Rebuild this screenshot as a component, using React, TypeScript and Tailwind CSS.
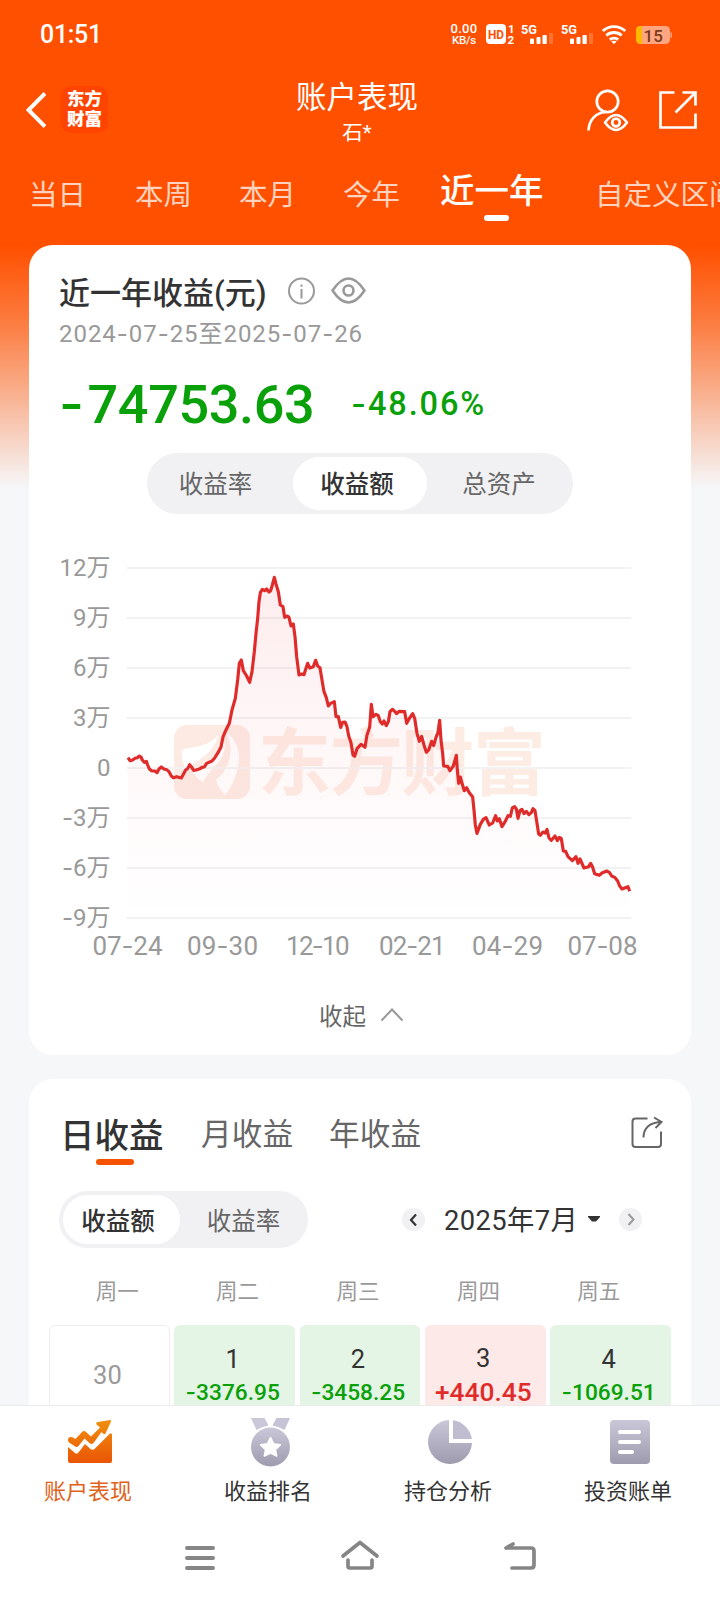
import React from "react";

const CJK = "font-['Roboto','Noto_Sans_CJK_SC',sans-serif]";

/** Numeric text whose hyphens use a wider glyph than the digit face has. */
function Num({ value, dash = "" }: { value: string; dash?: string }) {
  return (
    <>
      {value.split(/(-)/).map((part, i) =>
        part === "-" ? (
          <span key={i} className={`font-['Inter',sans-serif] ${dash}`}>
            -
          </span>
        ) : (
          part
        ),
      )}
    </>
  );
}

function StatusBar() {
  return (
    <div className="flex h-[68px] items-center pl-[40px] text-white">
      <span className="w-[411px] text-[25px] leading-none font-medium tracking-[-0.3px]">01:51</span>
      <div className="flex w-[26px] flex-col items-center gap-px leading-[10px] font-medium">
        <span className="text-[13px] tracking-[0.3px]">0.00</span>
        <span className="text-[11.500px] tracking-[-0.2px]">KB/s</span>
      </div>
      <svg className="ml-[9px] h-[24px] w-[190px]" viewBox="486 21 190 24" fill="#fff" fontFamily="Roboto, sans-serif" fontWeight="700">
        <rect x="486" y="23" width="20" height="20" rx="4" />
        <text x="488" y="37.700" fontSize="13" fill="#ff5000" textLength="16" lengthAdjust="spacingAndGlyphs">HD</text>
        <text x="508" y="31.500" fontSize="11.500">1</text>
        <text x="507.500" y="43" fontSize="11.500">2</text>
        {[521, 561].map((x) => (
          <g key={x}>
            <text x={x} y="32.500" fontSize="13" textLength="16" lengthAdjust="spacingAndGlyphs">5G</text>
            <rect x={x + 9} y="37.500" width="4" height="5.500" rx="1" />
            <rect x={x + 15.500} y="36" width="4" height="7" rx="1" />
            <rect x={x + 21.500} y="34" width="4.300" height="9" rx="1" />
            <rect x={x + 28} y="32" width="4" height="11" rx="1" opacity=".2" />
          </g>
        ))}
        <g fill="none" stroke="#fff" strokeWidth="2.900">
          <path d="M602.800 30a16.500 16.500 0 0 1 22.400 0" />
          <path d="M606.300 34.500a11.500 11.500 0 0 1 15.400 0" />
          <path d="M609.800 38.700a6.500 6.500 0 0 1 8.400 0" />
        </g>
        <path d="M611.300 40.600q2.700-1.500 5.400 0l-2.700 2.700z" />
        <rect x="636" y="25" width="34" height="18" rx="4.500" fill="#ffa680" />
        <path d="M640.500 25H642v18h-1.500a4.500 4.500 0 0 1-4.500-4.500v-9a4.500 4.500 0 0 1 4.500-4.500z" fill="#ffb700" />
        <path d="M670.500 31q1.500 0 1.500 1.500v3q0 1.500-1.500 1.500z" fill="#ffa680" />
        <text x="643.500" y="40.500" fontSize="17" fill="#7a3a1c" fontWeight="500" textLength="19.500">15</text>
      </svg>
    </div>
  );
}

function Header() {
  return (
    <div className="flex h-[84px] text-white">
      <div className="flex w-[220px] items-center pb-px pl-[26px]">
        <svg className="h-[36px] w-[20px]" viewBox="0 0 20 36" fill="none" stroke="#fff" strokeWidth="4">
          <path d="M19 1.500 2.500 18 19 34.500" />
        </svg>
        <div className="ml-[15px] flex size-[47px] flex-col items-center justify-center rounded-[10px] bg-[#ff4400] text-[17.500px] leading-[19.500px] font-black">
          <span>东方</span>
          <span>财富</span>
        </div>
      </div>
      <div className="flex w-[274px] flex-col items-center pt-[14px]">
        <span className="text-[30.500px] leading-[32px]">账户表现</span>
        <span className="mt-[8px] text-[20.500px] leading-[22px]">石*</span>
      </div>
      <svg className="h-[84px] w-[226px]" viewBox="494 68 226 84" fill="none" stroke="#fff" strokeWidth="2.700">
        <circle cx="607.500" cy="101.500" r="10.700" />
        <path d="M588.500 130.500c.5-10 7-18 17.500-18.500" strokeLinecap="butt" />
        <path d="M605 122.500q11-15 22 0q-11 15-22 0z" strokeLinejoin="round" />
        <circle cx="616" cy="122.500" r="3.800" />
        <path d="M674.500 92.500H660.500V127.500H695.500V113.500M682.500 92.500H695.500V105.500M695 93 675.500 112.500" />
      </svg>
    </div>
  );
}

function RangeTabs() {
  return (
    <div className="flex h-[93px] overflow-hidden pt-[29px] pl-[29px] text-[28.500px] leading-[30px] whitespace-nowrap text-[#ffd3bf]">
      <span className="w-[106px] shrink-0">当日</span>
      <span className="w-[104px] shrink-0">本周</span>
      <span className="w-[104px] shrink-0">本月</span>
      <span className="w-[97px] shrink-0">今年</span>
      <div className="-mt-[9px] flex w-[154px] shrink-0 flex-col">
        <span className="text-[34.500px] leading-[38px] font-medium text-white">近一年</span>
        <span className="mt-[5px] ml-[44px] h-[6px] w-[25px] rounded-full bg-white" />
      </div>
      <span className="shrink-0 pl-px">自定义区间</span>
    </div>
  );
}

const LINE =
  "264,683 270,692 278,690 285,685 292,683 298,678 303,681 307,690 313,697 319,694 323,705 328,717 336,723 345,723 351,728 357,717 364,711 372,717 380,719 387,725 394,738 400,743 410,740 424,744 431,731 437,720 443,716 449,704 454,710 461,721 468,720 480,716 486,712 493,711 500,700 516,693 524,684 534,668 543,651 549,621 558,600 568,580 576,540 586,505 593,450 598,400 604,390 610,422 620,438 629,457 636,425 643,365 648,310 653,265 657,215 661,188 667,178 674,182 680,177 687,186 692,182 697,165 703,142 708,162 715,185 721,225 729,230 734,262 742,258 747,262 753,288 760,282 765,320 770,380 777,435 785,432 792,434 797,418 803,400 809,414 820,410 827,391 833,408 840,413 846,450 852,485 859,503 865,528 872,520 883,515 888,560 895,560 902,592 908,577 915,576 921,590 926,617 933,638 939,675 944,679 951,656 963,643 975,652 981,615 989,592 994,523 999,560 1008,553 1015,557 1021,575 1027,582 1032,573 1039,587 1045,575 1050,545 1057,538 1063,543 1070,551 1077,544 1094,545 1100,580 1107,567 1118,551 1124,565 1131,610 1138,634 1145,619 1152,645 1159,667 1166,660 1175,634 1181,647 1188,622 1194,607 1199,571 1203,630 1208,670 1211,708 1223,709 1230,722 1240,708 1249,676 1252,720 1256,760 1261,741 1266,760 1273,782 1280,773 1287,787 1298,801 1302,840 1306,885 1311,910 1321,883 1330,868 1338,863 1348,885 1358,879 1367,857 1372,873 1378,866 1386,890 1397,872 1404,857 1411,859 1417,834 1424,830 1429,837 1434,865 1440,842 1446,838 1452,851 1459,844 1467,854 1474,848 1479,836 1485,842 1491,880 1496,912 1501,916 1509,906 1516,909 1521,898 1527,924 1534,931 1545,918 1552,932 1558,922 1564,926 1570,963 1577,964 1584,980 1597,992 1608,980 1614,1000 1620,987 1632,1014 1646,1010 1652,1000 1658,1012 1664,1031 1678,1036 1686,1029 1700,1023 1708,1027 1715,1038 1724,1042 1733,1053 1739,1068 1746,1077 1764,1070 1769,1084";

const Y_LABELS = ["12万", "9万", "6万", "3万", "0", "-3万", "-6万", "-9万"];
const X_LABELS: [string, number, number][] = [
  ["07-24", 92.500, 70],
  ["09-30", 187, 71],
  ["12-10", 286, 63.500],
  ["02-21", 379, 66.500],
  ["04-29", 472, 71],
  ["07-08", 567.500, 70],
];

function Chart() {
  return (
    <svg className="h-[444px] w-[662px]" viewBox="29 530 662 444" fontFamily="Roboto, 'Noto Sans CJK SC', sans-serif" fill="#999" fontSize="24">
      <defs>
        <linearGradient id="area" x1="0" y1="577" x2="0" y2="918" gradientUnits="userSpaceOnUse">
          <stop offset="0" stopColor="#f04050" stopOpacity=".1" />
          <stop offset=".5" stopColor="#f04050" stopOpacity=".04" />
          <stop offset="1" stopColor="#f04050" stopOpacity="0" />
        </linearGradient>
        <clipPath id="plot">
          <polygon points={`264,1164 ${LINE} 1769,1164`} transform="translate(40 530) scale(.33333)" />
        </clipPath>
      </defs>
      <rect x="174" y="725" width="76" height="74" rx="13" fill="#fdeae3" />
      <g fill="#fff">
        <path d="M181.500 752Q182 748 190 748Q208 746 219 735Q213 752 199 760Q190 765 187 772Q181.500 763 181.500 752Z" />
        <path d="M221.500 737Q222 753 211 762Q204 768 193 773Q197 779 203 782Q210 771 217 764Q225 756 225 745Q224 740 221.500 737Z" />
        <path d="M229 734Q240 745 239 760Q237 781 225 795Q218 788 216 780Q231 768 230.500 748Q230 740 227 734Z" />
      </g>
      <text x="258" y="789" fontSize="73" fontWeight="700" fill="#fdece4" textLength="288">东方财富</text>
      {Y_LABELS.map((label, i) => (
        <g key={label}>
          <path d={`M126.700 ${568 + i * 50}H631`} stroke="#f2f2f3" strokeWidth="2" />
          <text x="110.500" y={575.500 + i * 50} textAnchor="end">
            {label.startsWith("-") ? (
              <>
                <tspan fontFamily="Inter, sans-serif">-</tspan>
                {label.slice(1)}
              </>
            ) : (
              label
            )}
          </text>
        </g>
      ))}
      <rect x="127" y="570" width="504" height="348" fill="url(#area)" clipPath="url(#plot)" />
      <polyline points={LINE} transform="translate(40 530) scale(.33333)" fill="none" stroke="#df2c2b" strokeWidth="9.500" strokeLinejoin="round" />
      {X_LABELS.map(([label, x, w]) => (
        <text key={label} x={x} y="954.500" fontSize="26" textLength={w}>
          {label.slice(0, 2)}
          <tspan fontFamily="Inter, sans-serif">-</tspan>
          {label.slice(3)}
        </text>
      ))}
    </svg>
  );
}

function SummaryCard() {
  return (
    <section className="flex h-[810px] flex-col rounded-[24px] bg-white">
      <div className="mt-[30px] flex h-[31px] items-center pl-[30px]">
        <span className="w-[226px] pt-[5px] text-[31px] leading-none font-medium whitespace-nowrap text-[#333]">近一年收益(元)</span>
        <svg className="h-[30px] w-[84px]" viewBox="285 275.500 84 30" fill="none" stroke="#999" strokeWidth="2">
          <circle cx="301.500" cy="290.500" r="12.500" />
          <path d="M301.500 288.500v9.500M301.500 284v2.200" />
          <path d="M332.500 290q16-24 32 0q-16 24-32 0z" strokeWidth="2.600" strokeLinejoin="round" />
          <circle cx="348.500" cy="290" r="5" strokeWidth="2.600" />
        </svg>
      </div>
      <div className="mt-[12px] flex h-[32px] items-center pl-[30px] text-[24px] leading-none tracking-[0.95px] whitespace-nowrap text-[#999]">
        <span>
          <Num value="2024-07-25至2025-07-26" />
        </span>
      </div>
      <div className="mt-[27px] flex h-[54px] items-center pl-[33px] font-medium text-[#09a009]">
        <span className="w-[289px] text-[54px] leading-none tracking-[-0.4px]">
          <Num value="-74753.63" dash="ml-[-3px] mr-[4px]" />
        </span>
        <span className="text-[32.500px] leading-none tracking-[1.900px]">
          <Num value="-48.06%" />
        </span>
      </div>
      <div className="mt-[22px] ml-[118px] grid h-[61px] w-[426px] grid-cols-[146px_134px_146px] items-center rounded-full bg-[#f1f1f3] text-center text-[24.500px] leading-none text-[#666]">
        <span className="pt-[4px] pr-[9px]">收益率</span>
        <span className="flex h-[53px] items-center justify-center rounded-full bg-white pt-[4px] pr-[6px] font-medium text-[#333]">收益额</span>
        <span className="pt-[4px] pr-[2px]">总资产</span>
      </div>
      <div className="mt-[16px] flex">
        <Chart />
      </div>
      <div className="mt-[28px] flex h-[30px] items-center pl-[290px] text-[23.500px] leading-none text-[#666]">
        <span className="pt-[2px]">收起</span>
        <svg className="mb-[4px] ml-[14px] h-[14px] w-[24px]" viewBox="0 0 24 14" fill="none" stroke="#999" strokeWidth="2">
          <path d="M1.500 12.500 12 1.500 22.500 12.500" />
        </svg>
      </div>
    </section>
  );
}

const DAYS = [
  { day: "1", value: "-3376.95" },
  { day: "2", value: "-3458.25" },
  { day: "3", value: "+440.45" },
  { day: "4", value: "-1069.51" },
];

function CalendarCard() {
  return (
    <section className="mt-[24px] h-[326px] overflow-hidden rounded-t-[24px] bg-white">
      <div className="flex h-[88px] pl-[31px] text-[#666]">
        <div className="flex w-[141px] flex-col pt-[37px]">
          <span className="text-[34.500px] leading-[40px] font-medium text-[#333]">日收益</span>
          <span className="mt-[3px] ml-[36px] h-[6px] w-[38px] rounded-full bg-[#f55302]" />
        </div>
        <span className="w-[128px] pt-[36px] text-[30.700px] leading-[40px]">月收益</span>
        <span className="w-[301px] pt-[36px] text-[30.700px] leading-[40px]">年收益</span>
        <svg className="mt-[36px] size-[34px]" viewBox="630 1115 34 34" fill="none" stroke="#666" strokeWidth="2">
          <path d="M647.500 1118.500H635.500a3 3 0 0 0-3 3V1144a3 3 0 0 0 3 3H658a3 3 0 0 0 3-3V1131.500" />
          <path d="M643.500 1137.500c0-9 6-15 17-15.500M654 1117.500 661.500 1122 655.500 1128" />
        </svg>
      </div>
      <div className="mt-[24px] flex h-[57px] items-center pl-[30px]">
        <div className="grid h-[57px] w-[249px] grid-cols-[117px_128px] items-center rounded-full bg-[#f1f1f3] pl-[4px] text-center text-[24.500px] leading-none text-[#666]">
          <span className="flex h-[49px] items-center justify-center rounded-full bg-white pt-[5px] pr-[7px] font-medium text-[#333]">收益额</span>
          <span className="pt-[5px] pr-px">收益率</span>
        </div>
        <svg className="ml-[94px] size-[23px]" viewBox="0 0 23 23" fill="none">
          <circle cx="11.500" cy="11.500" r="11.500" fill="#f1f1f3" />
          <path d="M14 6.500 9 12 14 17.500" stroke="#333" strokeWidth="2.200" />
        </svg>
        <span className="ml-[19px] w-[144px] pt-[4px] text-[27.300px] leading-none tracking-[0.4px] whitespace-nowrap text-[#333]">2025年7月</span>
        <svg className="h-[7px] w-[12px]" viewBox="0 0 12 7" fill="#333">
          <path d="M0 0H12V1L8 5.500H4L0 1Z" />
        </svg>
        <svg className="mb-px ml-[19px] size-[23px]" viewBox="0 0 23 23" fill="none">
          <circle cx="11.500" cy="11.500" r="11.500" fill="#f1f1f3" />
          <path d="M9.500 6 14.500 11.500 9.500 17" stroke="#999" strokeWidth="2" />
        </svg>
      </div>
      <div className="mt-[29px] ml-[28px] grid h-[30px] w-[602px] grid-cols-5 items-center text-center text-[21.500px] leading-none text-[#999]">
        {["周一", "周二", "周三", "周四", "周五"].map((d) => (
          <span key={d}>{d}</span>
        ))}
      </div>
      <div className="mt-[18px] ml-[20px] grid w-[622px] grid-cols-5 gap-x-[4.500px] text-center text-[25.500px] leading-none text-[#333]">
        <div className="h-[100px] rounded-[6px] border border-[#eee] pt-[37px] pr-[4px] text-[#999]">30</div>
        {DAYS.map(({ day, value }) =>
          value.startsWith("+") ? (
            <div key={day} className="flex h-[100px] flex-col rounded-[6px] bg-[#fde9e8] pt-[21px] pr-[4px]">
              <span>{day}</span>
              <span className="mt-[7px] text-[26.300px] leading-[26px] font-medium text-[#df2c2b]">{value}</span>
            </div>
          ) : (
            <div key={day} className="flex h-[100px] flex-col rounded-[6px] bg-[#e4f4e5] pt-[22px] pr-[4px]">
              <span>{day}</span>
              <span className="mt-[7px] text-[22.700px] leading-[23px] font-medium text-[#09a009]">
                <Num value={value} />
              </span>
            </div>
          ),
        )}
      </div>
    </section>
  );
}

function BottomNav() {
  return (
    <nav className="h-[195px] border-t border-[#ebebed] bg-white">
      <svg width="0" height="0" className="absolute">
        <defs>
          <linearGradient id="violet" x1="0" y1="0" x2="0" y2="1">
            <stop offset="0" stopColor="#c9c7d8" />
            <stop offset="1" stopColor="#9d9bad" />
          </linearGradient>
          <linearGradient id="orange" x1="0" y1="1420" x2="0" y2="1463" gradientUnits="userSpaceOnUse">
            <stop offset="0" stopColor="#f0900f" />
            <stop offset="1" stopColor="#ea5504" />
          </linearGradient>
        </defs>
      </svg>
      <div className="grid h-[100px] w-[720px] grid-cols-4 text-[22px] leading-[26px] text-[#333]">
        <div className="flex flex-col items-center pt-[10px] pr-[4px] text-[#e0621b]">
          <svg className="h-[52px] w-[52px] translate-x-[2px]" viewBox="64 1416 52 52" fill="url(#orange)">
            <path d="M68 1440Q68 1437 71 1437Q73 1437 75.500 1439L82 1432Q84 1430 86 1432L91 1436.500L100 1427.500L96.500 1424.500Q95.500 1422.500 98 1422L110 1420Q111.500 1420 111 1421.500L105.500 1433.500Q104.500 1435 103 1433.500L101.500 1432L93.500 1443Q91.500 1445 89.500 1443L84.500 1438.500L78.500 1446Q76.500 1448 74.500 1446L69 1442.500Q68 1441.500 68 1440Z" />
            <path d="M68 1447L75 1453Q77 1454.500 78.500 1452.500L85 1444L90.500 1449Q92.500 1450.500 94.500 1449L109.500 1434Q112 1432 112 1435V1461a2 2 0 0 1-2 2H70a2 2 0 0 1-2-2z" />
          </svg>
          <span className="mt-[11px]">账户表现</span>
        </div>
        <div className="flex flex-col items-center pt-[10px] pr-[4px]">
          <svg className="h-[52px] w-[52px] translate-x-[3px]" viewBox="245 1416 52 52">
            <path d="M251 1418H264.500L268.500 1425.500Q262 1426.500 256.500 1430Z" fill="#c9c7d8" />
            <path d="M290 1418H276.500L272.500 1425.500Q279 1426.500 284.500 1430Z" fill="#c5c3d5" />
            <circle cx="270.500" cy="1447" r="19.500" fill="url(#violet)" />
            <path d="M270.500 1437.500 273.600 1443.800 280.500 1444.800 275.500 1449.700 276.700 1456 270.500 1453 264.300 1456 265.500 1449.700 260.500 1444.800 267.400 1443.800Z" fill="#fff" stroke="#fff" strokeWidth="1.500" strokeLinejoin="round" />
          </svg>
          <span className="mt-[11px]">收益排名</span>
        </div>
        <div className="flex flex-col items-center pt-[10px] pr-[4px]">
          <svg className="h-[52px] w-[52px] translate-x-[2px]" viewBox="424 1416 52 52">
            <path d="M449 1420A22 22 0 1 0 472 1443H449Z" fill="url(#violet)" />
            <path d="M453 1420.200A22 22 0 0 1 471.800 1439H453Z" fill="#bfbdcf" />
          </svg>
          <span className="mt-[11px]">持仓分析</span>
        </div>
        <div className="flex flex-col items-center pt-[10px] pr-[4px]">
          <svg className="h-[52px] w-[52px] translate-x-[2px]" viewBox="604 1416 52 52">
            <rect x="610" y="1420" width="40" height="44" rx="4" fill="url(#violet)" />
            <path d="M620 1432H639M620 1442H639M620 1452H632" stroke="#fff" strokeWidth="4" strokeLinecap="round" />
          </svg>
          <span className="mt-[11px]">投资账单</span>
        </div>
      </div>
      <div className="flex h-[94px] justify-center gap-[120px] pt-[32px]">
        <svg className="size-[40px]" viewBox="180 1538 40 40" stroke="#868686" strokeWidth="4" strokeLinecap="round">
          <path d="M187 1548H213M187 1558H213M187 1568H213" />
        </svg>
        <svg className="size-[40px]" viewBox="340 1538 40 40" fill="none" stroke="#868686" strokeWidth="3.700" strokeLinecap="round" strokeLinejoin="round">
          <path d="M343 1556 360 1542.500 377 1556M348 1560V1566Q348 1568 350 1568H370Q372 1568 372 1566V1560" />
        </svg>
        <svg className="size-[40px]" viewBox="500 1538 40 40" fill="none" stroke="#868686" strokeWidth="3.700" strokeLinecap="round" strokeLinejoin="round">
          <path d="M513 1544 506 1548H531Q534 1548 534 1551V1565Q534 1568 531 1568H512" />
        </svg>
      </div>
    </nav>
  );
}

export default function App() {
  return (
    <div className={`h-[1600px] w-[720px] overflow-hidden bg-[#f6f7f9] ${CJK}`}>
      <div className="h-[1405px] overflow-hidden bg-[linear-gradient(to_bottom,#ff5000_0px,#ff5000_246px,#fc7a3e_320px,#f9a67f_380px,#f7d3c4_440px,#f6f7f9_488px)]">
        <StatusBar />
        <Header />
        <RangeTabs />
        <main className="px-[29px]">
          <SummaryCard />
          <CalendarCard />
        </main>
      </div>
      <BottomNav />
    </div>
  );
}
